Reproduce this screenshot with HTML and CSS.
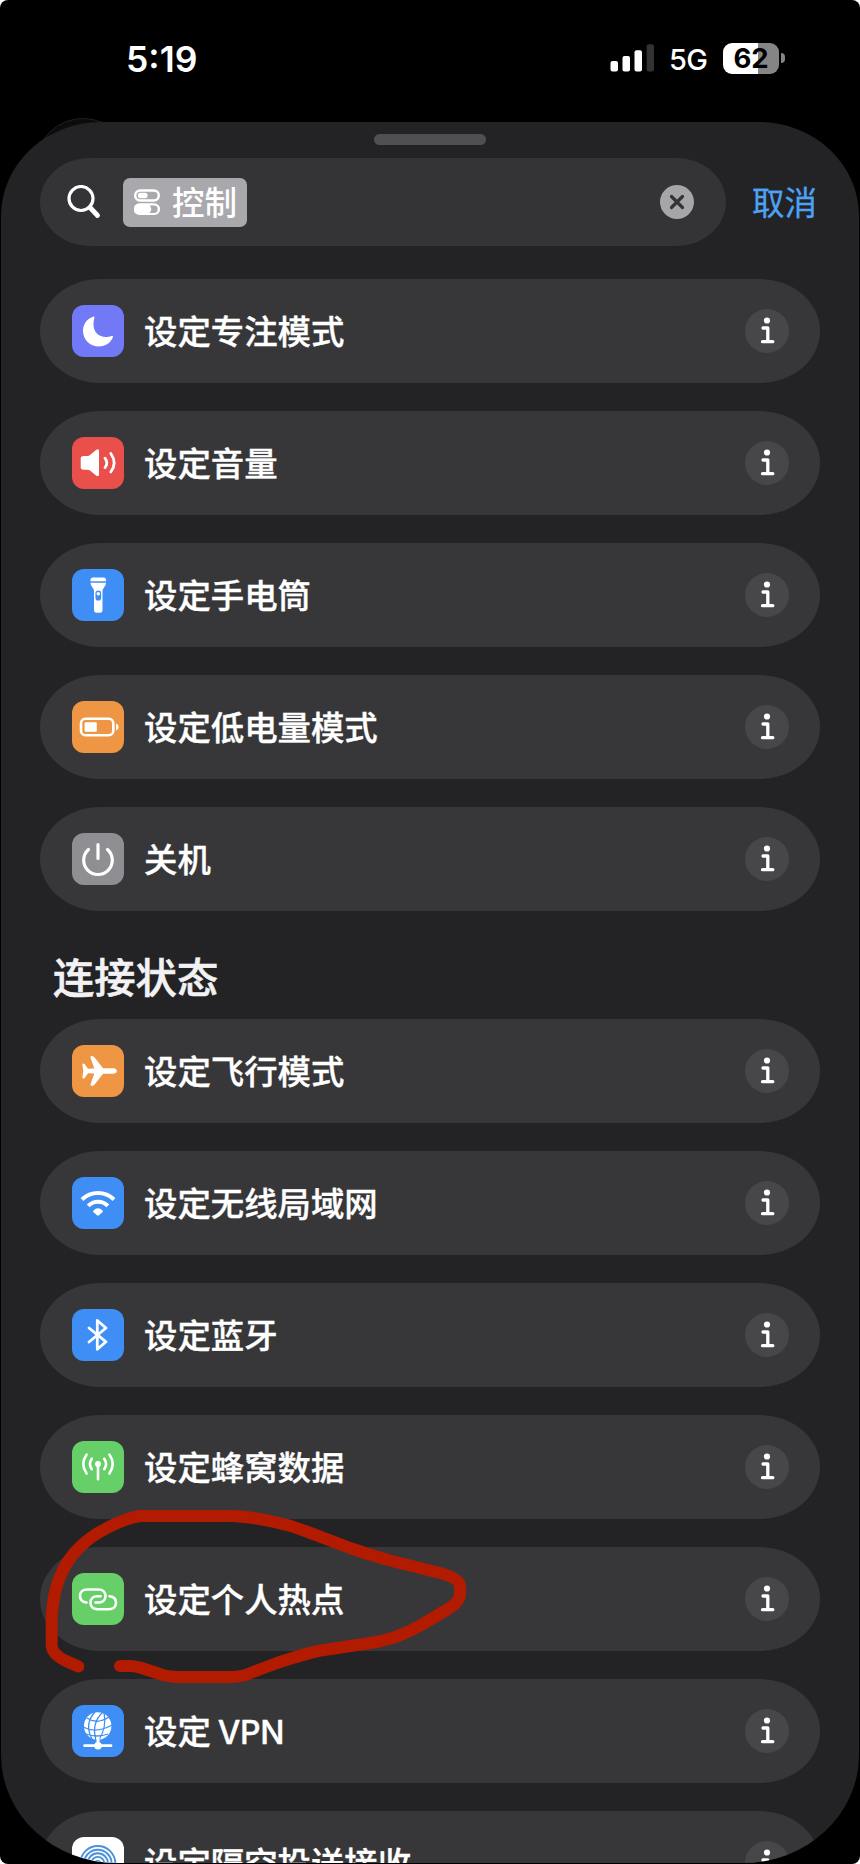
FILE: index.html
```
<!DOCTYPE html>
<html lang="zh-CN">
<head>
<meta charset="utf-8">
<title>快捷指令</title>
<link rel="stylesheet" href="styles.css">
</head>
<body>
<div class="screen">
  <svg class="ghost" viewBox="0 0 96 96"><circle cx="48" cy="48" r="47.5" fill="#0c0c0c" stroke="#202020"/></svg>
  <header class="status">
    <span class="time">5:19</span>
    <svg class="signal" viewBox="0 0 45 28"><g fill="#fff"><rect x="0.5" y="17" width="7.5" height="10.5" rx="2"/><rect x="12.5" y="12" width="7.5" height="15.5" rx="2"/><rect x="24.5" y="6.300" width="7.5" height="21.200" rx="2"/></g><rect x="36.700" y="0.300" width="7.300" height="27.200" rx="2" fill="#333"/></svg>
    <span class="network">5G</span>
    <div class="battery"><span class="level">62</span></div>
    <i class="cap"></i>
  </header>
  <main class="sheet">
    <div class="grabber"></div>
    <div class="search-row">
      <div class="search">
        <svg class="magnifier" viewBox="0 0 34 34"><circle cx="14" cy="13.500" r="12" fill="none" stroke="#fff" stroke-width="3.200"/><path d="M23 22.500 30.500 30.500" stroke="#fff" stroke-width="4.800" stroke-linecap="round"/></svg>
        <div class="token">
          <svg class="toggles" viewBox="0 0 26 27"><rect x="1.200" y="1.500" width="23.600" height="10" rx="5" fill="none" stroke="#fff" stroke-width="2.400"/><rect x="3.800" y="3.800" width="9.800" height="5.400" rx="2.700" fill="#fff"/><path d="M5.500 14.300H20.200A5.850 5.850 0 0 1 20.200 26H5.500A5.850 5.850 0 0 1 5.500 14.300Z" fill="#fff"/><path d="M15.500 16.500H20A3.700 3.700 0 0 1 20 23.900H15.500Q19 20.200 15.500 16.500Z" fill="#a9a9ad"/></svg>
          <span class="token-text">控制</span>
        </div>
        <svg class="clear" viewBox="0 0 34 34"><circle cx="17" cy="17" r="17" fill="#a5a5aa"/><path d="M11.500 11.500 22.500 22.500M22.500 11.500 11.500 22.500" stroke="#343436" stroke-width="3.200" stroke-linecap="round"/></svg>
      </div>
      <span class="cancel">取消</span>
    </div>
    <section class="list first">
      <div class="row"><svg class="tile indigo" viewBox="0 0 52 52"><path fill="#fff" d="M21 11.700C14.500 14 11 19.500 11 25.700 11 34.700 18 41.500 27 41.500 33.500 41.500 38.600 38 40.900 32.300 41.300 31.200 40.600 30.600 39.500 31 37.500 31.800 36 32 34 32 26.500 32 21.500 27 21.500 19.500 21.500 17 21.800 15 22.400 13 22.700 11.900 22 11.300 21 11.700Z"/></svg><span class="label">设定专注模式</span><svg class="info" viewBox="0 0 44 44"><use href="#info"/></svg></div>
      <div class="row"><svg class="tile red" viewBox="0 0 52 52"><path fill="#fff" d="M11.500 19H15.500Q17 19 18 18L24 13Q27 11 27 14V37.500Q27 40.500 24 38.500L18 33.500Q17 32.800 15.500 32.800H11.500Q8.700 32.800 8.700 30V21.800Q8.700 19 11.500 19Z"/><path class="line" d="M33 21.200Q36.600 26 33 30.600M38.800 16.500Q45.500 26 38.800 35"/></svg><span class="label">设定音量</span><svg class="info" viewBox="0 0 44 44"><use href="#info"/></svg></div>
      <div class="row"><svg class="tile blue" viewBox="0 0 52 52"><path fill="#fff" d="M21 8.500H31.500Q34 8.500 34 11V12.300H18.500V11Q18.500 8.500 21 8.500ZM18.500 13.800H34Q34 16.500 32 18.500 30.500 20.200 30.500 22V41Q30.500 43.800 28 43.800H24.500Q22 43.800 22 41V22Q22 20.200 20.500 18.500 18.500 16.500 18.500 13.800Z"/><rect x="24" y="22" width="4.600" height="9" rx="2.300" fill="#3f8ef5" stroke="#3f8ef5" stroke-width="1.100"/><circle cx="26.300" cy="24.800" r="1.800" fill="#fff"/></svg><span class="label">设定手电筒</span><svg class="info" viewBox="0 0 44 44"><use href="#info"/></svg></div>
      <div class="row"><svg class="tile orange" viewBox="0 0 52 52"><rect class="line thin" x="9" y="17.800" width="32.300" height="16.400" rx="4.500"/><rect x="12.600" y="21.300" width="12.200" height="9.400" rx="1" fill="#fff"/><path d="M44 22.500Q46.700 23.500 46.700 26T44 29.500Z" fill="#fff"/></svg><span class="label">设定低电量模式</span><svg class="info" viewBox="0 0 44 44"><use href="#info"/></svg></div>
      <div class="row"><svg class="tile gray" viewBox="0 0 52 52"><path class="line power" d="M26 11.500V25.500M16.500 16.500A14.300 14.300 0 1 0 35.500 16.500"/></svg><span class="label">关机</span><svg class="info" viewBox="0 0 44 44"><use href="#info"/></svg></div>
    </section>
    <h2 class="heading">连接状态</h2>
    <section class="list">
      <div class="row"><svg class="tile orange" viewBox="0 0 52 52"><path fill="#fff" d="M31 23.300 22.600 12.500Q21.300 10.800 19.600 11 18 11.200 18.600 13L22.300 23.500 16 23.800 12.800 19.300Q12 18.200 11 18.500 10.200 18.800 10.400 20L11.300 26 10.400 32Q10.200 33.200 11 33.500 12 33.800 12.800 32.700L16 28.300 22.300 28.500 18.600 39Q18 40.700 19.600 40.900 21.300 41.200 22.600 39.500L31 28.700H41.500Q44.800 28.200 44.800 26T41.500 23.300Z"/></svg><span class="label">设定飞行模式</span><svg class="info" viewBox="0 0 44 44"><use href="#info"/></svg></div>
      <div class="row"><svg class="tile blue" viewBox="0 0 52 52"><path class="wifi" d="M10 22.500A22.800 22.800 0 0 1 42 22.500M16.200 28.800A13.800 13.800 0 0 1 35.800 28.800"/><path fill="#fff" d="M21.300 33.700Q26 29 30.700 33.700 31.200 34.400 30.700 35L27 38.300Q26 39 25 38.300L21.300 35Q20.800 34.400 21.300 33.700Z"/></svg><span class="label">设定无线局域网</span><svg class="info" viewBox="0 0 44 44"><use href="#info"/></svg></div>
      <div class="row"><svg class="tile blue" viewBox="0 0 52 52"><path class="line" d="M17 19 34 32.800 25.300 40.300V11.500L34 19 17 33"/></svg><span class="label">设定蓝牙</span><svg class="info" viewBox="0 0 44 44"><use href="#info"/></svg></div>
      <div class="row"><svg class="tile green" viewBox="0 0 52 52"><circle cx="26" cy="23" r="3" fill="#fff"/><path class="line thin" d="M26 24V38.200M19.800 17.700Q16 23 19.800 28.200M32.200 17.700Q36 23 32.200 28.200M14.600 13.500Q8 23 14.600 32.500M37.400 13.500Q44 23 37.400 32.500"/></svg><span class="label">设定蜂窝数据</span><svg class="info" viewBox="0 0 44 44"><use href="#info"/></svg></div>
      <div class="row"><svg class="tile green" viewBox="0 0 52 52"><path class="line thin" d="M14.500 29.500C10 29 8 26.500 8 23 8 19 11 16.500 15 16.500H26.500C31 16.500 33.500 19.500 33.500 23 33.500 27 30.500 29.500 27 29.500H23.500"/><path class="line thin" d="M37.500 23.200C42 23.700 44 26.200 44 29.700 44 33.700 41 36.200 37 36.200H25.500C21 36.200 18.500 33.200 18.500 29.700 18.500 25.700 21.500 23.200 25 23.200H28.500"/></svg><span class="label">设定个人热点</span><svg class="info" viewBox="0 0 44 44"><use href="#info"/></svg></div>
      <div class="row"><svg class="tile blue" viewBox="0 0 52 52"><circle cx="25.700" cy="21" r="13.700" fill="#fff"/><path class="grid" d="M31 7Q19 18 24 35M23 7Q12 19 20 34M32 7Q35 22 27 35M15 13Q25 20 37 12M11 22Q24 29 40 20M14 29Q25 33 36 29"/><path d="M26 32V40" stroke="#fff" stroke-width="3"/><path class="line" d="M12.600 40.700H39"/><circle cx="26" cy="40.700" r="3.800" fill="#fff"/></svg><span class="label">设定 <b class="latin">VPN</b></span><svg class="info" viewBox="0 0 44 44"><use href="#info"/></svg></div>
      <div class="row"><svg class="tile white" viewBox="0 0 52 52"><g fill="none" stroke="#4a92dc" stroke-width="1.900"><circle cx="25.800" cy="26.500" r="17.500"/><circle cx="25.800" cy="26.500" r="13.800"/><circle cx="25.800" cy="26.500" r="10.200"/><circle cx="25.800" cy="26.500" r="6.600"/></g><circle cx="25.800" cy="26.500" r="3.500" fill="#4a92dc"/></svg><span class="label">设定隔空投送接收</span><svg class="info" viewBox="0 0 44 44"><use href="#info"/></svg></div>
    </section>
  </main>
  <svg class="marker" viewBox="0 0 860 1864"><path d="M78.300 1666.500 64 1660Q52.500 1654 51.700 1646V1617Q53 1593 60 1577 67 1559 80 1547 91 1536 107 1528 125 1518.500 140 1516H233Q253 1517 273 1521.700 290 1525 307 1531.700L350 1548Q370 1555 390 1560.500L438 1572.500Q460 1578 460 1586V1594Q460 1603 443 1612L423 1624Q410 1631 403 1634 388 1641 357 1645L324 1650Q310 1652 277 1663L253 1672Q243 1677 230 1677H180Q167 1677 157 1673L140 1667.500Q134 1666 130 1666H120"/></svg>
</div>
<svg class="defs" width="0" height="0"><defs><g id="info"><circle cx="22" cy="22" r="22" fill="#47474a"/><circle cx="22" cy="11.500" r="3.100" fill="#fff"/><path d="M18 19H22.800V32.700M17.500 32.700H27.800" fill="none" stroke="#fff" stroke-width="3.300" stroke-linecap="round" stroke-linejoin="round"/></g></defs></svg>
</body>
</html>
```
FILE: styles.css
```
body {
  margin: 0;
  background: #fff;
  font-family: Inter, "Noto Sans CJK SC", sans-serif;
  color: #fff;
}

.screen {
  position: relative;
  box-sizing: border-box;
  width: 860px;
  height: 1864px;
  overflow: hidden;
  border-radius: 8px;
  background: #000;
}

.ghost {
  position: absolute;
  left: 35px;
  top: 118px;
  width: 96px;
  height: 96px;
}

.defs { position: absolute; }

.status {
  display: flex;
  align-items: center;
  height: 116px;
  padding-left: 126px;
  margin-bottom: 6px;
}

.time {
  width: 484px;
  padding-top: 3px;
  font-size: 35.5px;
  font-weight: 600;
  line-height: 40px;
}

.signal { width: 45px; height: 28px; margin-right: 14px; }

.network { width: 54px; font-size: 29px; font-weight: 500; letter-spacing: -0.8px; padding-top: 3px; }

.battery {
  width: 56px;
  height: 31px;
  border-radius: 9px;
  background: linear-gradient(to right, #fff 35px, #858585 35px);
  color: #000;
  text-align: center;
}

.level { display: block; font-size: 27.5px; font-weight: 700; line-height: 31px; }

.cap { width: 4px; height: 10px; margin-left: 2px; border-radius: 0 5px 5px 0; background: #858585; }

.sheet {
  position: relative;
  box-sizing: border-box;
  height: 1741px;
  margin: 0 1px;
  padding: 12px 39px 0;
  overflow: hidden;
  border-radius: 100px 100px 116px 116px / 94px 94px 108px 108px;
  background: #232325;
}

.grabber { width: 112px; height: 11px; margin: 0 auto 13px; border-radius: 6px; background: #505052; }

.search-row { display: flex; align-items: center; }

.search {
  display: flex;
  align-items: center;
  box-sizing: border-box;
  width: 686px;
  height: 88px;
  padding: 0 32px 0 27px;
  border-radius: 50px / 44px;
  background: #343436;
}

.magnifier { width: 34px; height: 34px; margin-right: 22px; }

.token {
  display: flex;
  align-items: center;
  box-sizing: border-box;
  width: 124px;
  height: 49px;
  padding-left: 11px;
  border-radius: 7px;
  background: #a9a9ad;
}

.token-text { padding-top: 2px; font-size: 32.5px; font-weight: 500; line-height: 47px; }

.toggles { width: 26px; height: 27px; margin-right: 12px; }

.clear { width: 34px; height: 34px; margin-left: auto; }

.cancel {
  padding-top: 4px;
  margin-left: 26px;
  font-size: 32.5px;
  line-height: 44px;
  color: #4ea1f3;
  -webkit-text-stroke: 0.3px #4ea1f3;
}

.list { display: flex; flex-direction: column; gap: 28px; }

.first { margin-top: 33px; }

.row {
  display: flex;
  flex: none;
  align-items: center;
  box-sizing: border-box;
  height: 104px;
  padding: 0 31px 0 32px;
  border-radius: 60px / 52px;
  background: #373739;
}

.tile { width: 52px; height: 52px; margin-right: 20px; border-radius: 12px; }

.indigo { background: #7179f6; }
.red { background: #e94f4b; }
.blue { background: #3f8ef5; }
.orange { background: #ee9644; }
.gray { background: #8e8e93; }
.green { background: #66cf68; }
.white { background: #fff; }

.label {
  padding-top: 2px;
  font-size: 33.4px;
  font-weight: 500;
  line-height: 50px;
  white-space: nowrap;
  -webkit-text-stroke: 0.35px #fff;
}

.latin { margin-left: -2px; font-size: 32px; font-weight: 500; letter-spacing: -0.3px; }

.info { width: 44px; height: 44px; margin-left: auto; }

.heading {
  height: 60px;
  margin: 37px 0 11px 13px;
  font-size: 41.3px;
  font-weight: 500;
  line-height: 60px;
  color: #f2f2f5;
  -webkit-text-stroke: 0.6px #f2f2f5;
}

.line { fill: none; stroke: #fff; stroke-width: 2.8; stroke-linecap: round; stroke-linejoin: round; }
.thin { stroke-width: 2.6; }
.power { stroke-width: 3.2; }
.wifi { fill: none; stroke: #fff; stroke-width: 4; stroke-linecap: butt; }
.grid { fill: none; stroke: #3f8ef5; stroke-width: 1.3; }

.marker {
  position: absolute;
  left: 0;
  top: 0;
  width: 860px;
  height: 1864px;
  fill: none;
  stroke: #b31b00;
  stroke-width: 12;
  stroke-linecap: round;
  stroke-linejoin: round;
}
```
